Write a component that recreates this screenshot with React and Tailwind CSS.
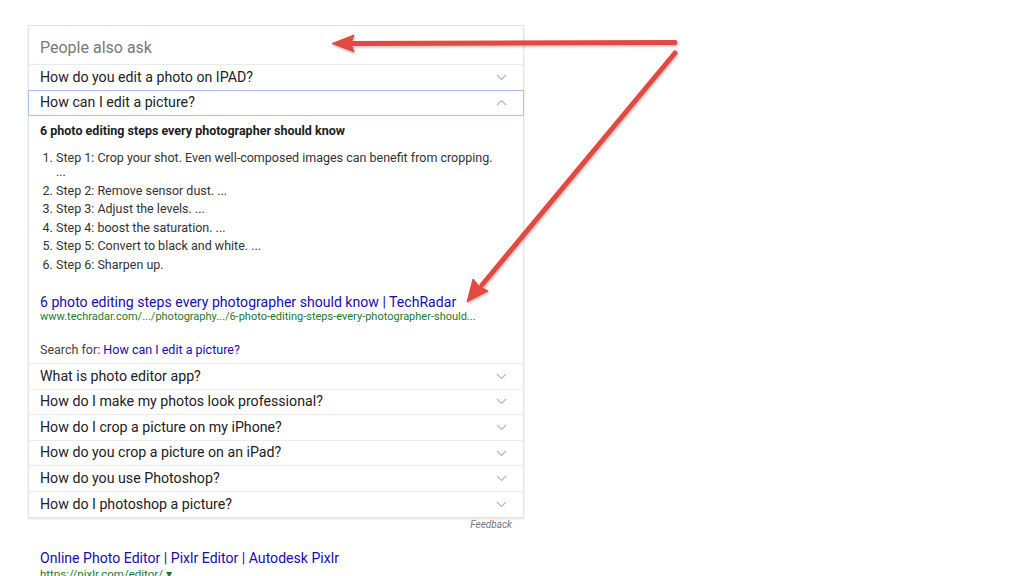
import { useState } from "react";

const QUESTIONS_TOP = ["How do you edit a photo on IPAD?"];

const QUESTIONS_BOTTOM = [
  "What is photo editor app?",
  "How do I make my photos look professional?",
  "How do I crop a picture on my iPhone?",
  "How do you crop a picture on an iPad?",
  "How do you use Photoshop?",
  "How do I photoshop a picture?",
];

const STEPS = [
  "Step 2: Remove sensor dust. ...",
  "Step 3: Adjust the levels. ...",
  "Step 4: boost the saturation. ...",
  "Step 5: Convert to black and white. ...",
  "Step 6: Sharpen up.",
];

const Chevron = ({ up }) => (
  <svg width="11" height="7" viewBox="0 0 11 7" className="shrink-0">
    <path
      d={up ? "M1 6 L5.5 1.5 L10 6" : "M1 1 L5.5 5.5 L10 1"}
      fill="none"
      stroke="#b8b8b8"
      strokeWidth="1.2"
    />
  </svg>
);

const QuestionRow = ({ text, open, onClick }) => (
  <button
    onClick={onClick}
    className={`flex items-center justify-between pl-[11px] pr-[16px] text-left text-[14.2px] text-[#222] ${
      open
        ? "h-[26px] border border-[#a8bfe6] -mx-px w-[calc(100%+2px)]"
        : "w-full h-[25.6px] border-t border-[#ebebeb]"
    }`}
  >
    <span>{text}</span>
    <Chevron up={open} />
  </button>
);

const Arrows = () => (
  <svg
    width="1024"
    height="576"
    className="absolute left-0 top-0 pointer-events-none"
  >
    <defs>
      <filter id="sh" x="-10%" y="-10%" width="120%" height="120%">
        <feDropShadow dx="1" dy="1.5" stdDeviation="1.2" floodColor="#000" floodOpacity="0.25" />
      </filter>
    </defs>
    <g filter="url(#sh)" fill="#e2483f" stroke="#e2483f">
      <line x1="675" y1="42.5" x2="350" y2="43.5" strokeWidth="5" strokeLinecap="round" />
      <polygon points="332,43.5 354,35 351,43.5 354,52" strokeWidth="1" strokeLinejoin="round" />
      <line x1="675" y1="53" x2="482" y2="285" strokeWidth="5" strokeLinecap="round" />
      <polygon points="467,302 473,279 479,286 488,291" strokeWidth="1" strokeLinejoin="round" />
    </g>
  </svg>
);

export default function App() {
  const [open, setOpen] = useState(true);

  return (
    <div
      className="relative w-[1024px] h-[576px] overflow-hidden bg-white"
      style={{ fontFamily: "Roboto, 'Liberation Sans', sans-serif" }}
    >
      <div className="pl-[28px] pt-[25px]">
        <div className="w-[496px] border border-[#e4e4e4] shadow-[0_1px_2px_rgba(0,0,0,0.12)] bg-white">
          <div className="h-[38px] flex items-center pl-[11px] pt-[5px] text-[16px] text-[#787878]">
            People also ask
          </div>

          {QUESTIONS_TOP.map((q) => (
            <QuestionRow key={q} text={q} />
          ))}

          <QuestionRow
            text="How can I edit a picture?"
            open={open}
            onClick={() => setOpen(!open)}
          />

          {open && (
            <div className="pl-[11px] pr-[12px] pt-[6px] pb-[4px] text-[12.5px] text-[#222]">
              <div className="font-bold leading-[18px]">
                6 photo editing steps every photographer should know
              </div>
              <ol className="mt-[9px] list-decimal pl-[16px] leading-[18.4px] text-[#333]">
                <li>
                  Step 1: Crop your shot. Even well-composed images can benefit
                  from cropping.
                  <div className="leading-[15px] -translate-y-[3px]">...</div>
                </li>
                {STEPS.map((s) => (
                  <li key={s}>{s}</li>
                ))}
              </ol>
              <div className="mt-[20px] text-[14.1px] leading-[16px] text-[#1a0dab]">
                6 photo editing steps every photographer should know | TechRadar
              </div>
              <div className="text-[11px] leading-[14px] text-[#1b7a2f]">
                www.techradar.com/.../photography.../6-photo-editing-steps-every-photographer-should...
              </div>
              <div className="mt-[17px] leading-[18px] text-[#444]">
                Search for:{" "}
                <span className="text-[#1a0dab]">How can I edit a picture?</span>
              </div>
            </div>
          )}

          {QUESTIONS_BOTTOM.map((q) => (
            <QuestionRow key={q} text={q} />
          ))}
        </div>

        <div className="w-[484px] text-right text-[10px] italic text-[#777] -mt-px">
          Feedback
        </div>

        <div className="mt-[17px] pl-[12px]">
          <div className="text-[14.1px] leading-[18px] text-[#1a0dab]">
            Online Photo Editor | Pixlr Editor | Autodesk Pixlr
          </div>
          <div className="text-[11.5px] leading-[14px] text-[#1b7a2f]">
            https://pixlr.com/editor/ ▾
          </div>
        </div>
      </div>

      <Arrows />
    </div>
  );
}
